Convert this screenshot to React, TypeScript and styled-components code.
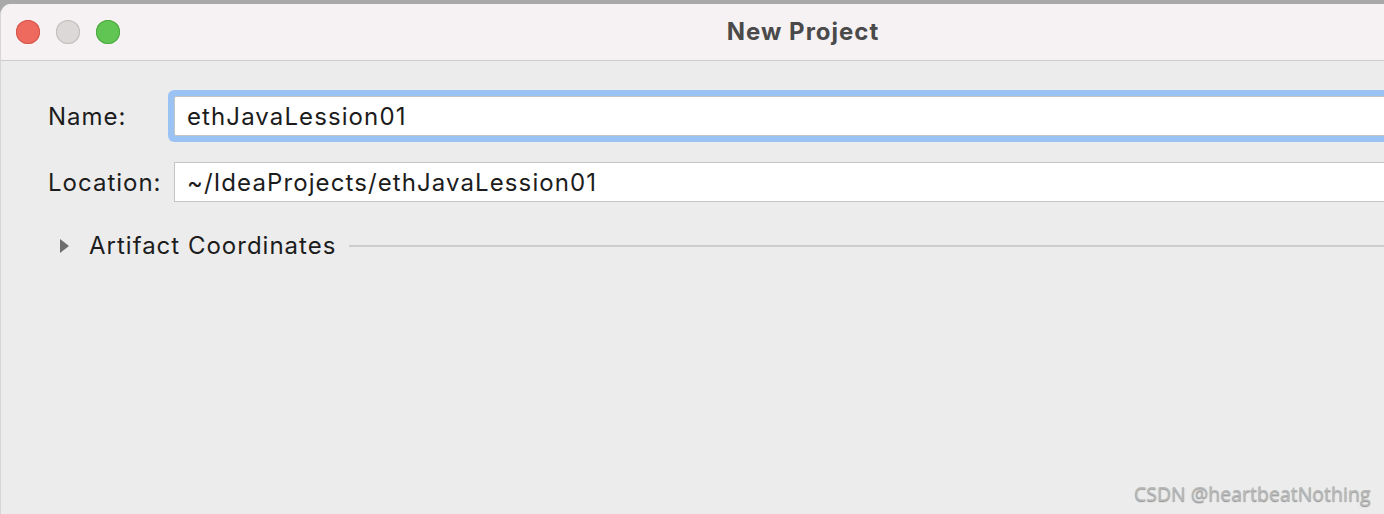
import React from "react";
import styled, { createGlobalStyle } from "styled-components";

const GlobalStyle = createGlobalStyle`
  html, body {
    margin: 0;
    padding: 0;
    overflow: hidden;
    background: #a9a9a9;
    font-family: Inter, "Noto Sans", "Liberation Sans", sans-serif;
  }
`;

const Desk = styled.div`
  width: 1384px;
  height: 514px;
  padding-top: 4px;
  box-sizing: border-box;
  overflow: hidden;
`;

const Window = styled.div`
  width: 1604px;
  height: 510px;
  background: #ececec;
  border-top-left-radius: 11px;
  border-left: 1px solid #d6d6d6;
  overflow: hidden;
  display: flex;
  flex-direction: column;
`;

const TitleBar = styled.div`
  height: 57px;
  box-sizing: border-box;
  padding-bottom: 1px;
  background: #f6f2f3;
  border-bottom: 1px solid #cfcdce;
  display: grid;
  grid-template-columns: 1fr auto 1fr;
  align-items: center;
`;

const Lights = styled.div`
  display: flex;
  gap: 16px;
  padding-left: 15px;
  padding-top: 1px;
`;

const Light = styled.span<{ $color: string; $edge: string }>`
  width: 24px;
  height: 24px;
  border-radius: 50%;
  background: ${(p) => p.$color};
  box-shadow: inset 0 0 0 1px ${(p) => p.$edge};
`;

const Title = styled.div`
  font-size: 24px;
  font-weight: 700;
  color: #4b4a4b;
  letter-spacing: 1px;
`;

const Body = styled.div`
  flex: 1;
  padding: 35px 0 0 47px;
  display: flex;
  flex-direction: column;
  position: relative;
`;

const Row = styled.div<{ $gap: number }>`
  display: flex;
  align-items: center;
  margin-bottom: ${(p) => p.$gap}px;
`;

const Label = styled.label`
  width: 121px;
  font-size: 24px;
  letter-spacing: 1px;
  color: #1c1c1c;
  flex-shrink: 0;
`;

const Field = styled.div<{ $focused?: boolean }>`
  flex: 1;
  height: 40px;
  margin-left: 5px;
  background: #fff;
  border: 1px solid #c4c4c4;
  box-shadow: ${(p) => (p.$focused ? "0 0 0 6px #9ac2f2" : "none")};
  border-radius: ${(p) => (p.$focused ? "2px" : "0")};
  display: flex;
  align-items: center;
  padding-left: 12px;
  font-size: 24px;
  letter-spacing: 1.1px;
  color: #1c1c1c;
  box-sizing: border-box;
`;

const Section = styled.div`
  display: flex;
  align-items: center;
  margin-top: 29px;
  padding-left: 12px;
`;

const Caret = styled.span`
  width: 0;
  height: 0;
  border-top: 7px solid transparent;
  border-bottom: 7px solid transparent;
  border-left: 9px solid #6e6e6e;
  margin-right: 20px;
`;

const SectionTitle = styled.span`
  font-size: 24px;
  letter-spacing: 1px;
  color: #1c1c1c;
  margin-right: 13px;
`;

const Rule = styled.div`
  flex: 1;
  height: 2px;
  background: #cdcdcd;
`;

const Watermark = styled.div`
  position: absolute;
  left: 1133px;
  top: 419px;
  font-family: "Open Sans", "Noto Sans", sans-serif;
  font-size: 19.5px;
  color: #b9b9b9;
  text-shadow: 0 1px 1px #8f8f8f;
  white-space: nowrap;
`;

export default function App() {
  return (
    <>
      <GlobalStyle />
      <Desk>
        <Window>
          <TitleBar>
            <Lights>
              <Light $color="#ee6a5e" $edge="#d5544a" />
              <Light $color="#dcd8d8" $edge="#bfbcbc" />
              <Light $color="#61c554" $edge="#4ba73f" />
            </Lights>
            <Title>New Project</Title>
            <div />
          </TitleBar>
          <Body>
            <Row $gap={26}>
              <Label>Name:</Label>
              <Field $focused>ethJavaLession01</Field>
            </Row>
            <Row $gap={0}>
              <Label>Location:</Label>
              <Field>~/IdeaProjects/ethJavaLession01</Field>
            </Row>
            <Section>
              <Caret />
              <SectionTitle>Artifact Coordinates</SectionTitle>
              <Rule />
            </Section>
            <Watermark>CSDN @heartbeatNothing</Watermark>
          </Body>
        </Window>
      </Desk>
    </>
  );
}
